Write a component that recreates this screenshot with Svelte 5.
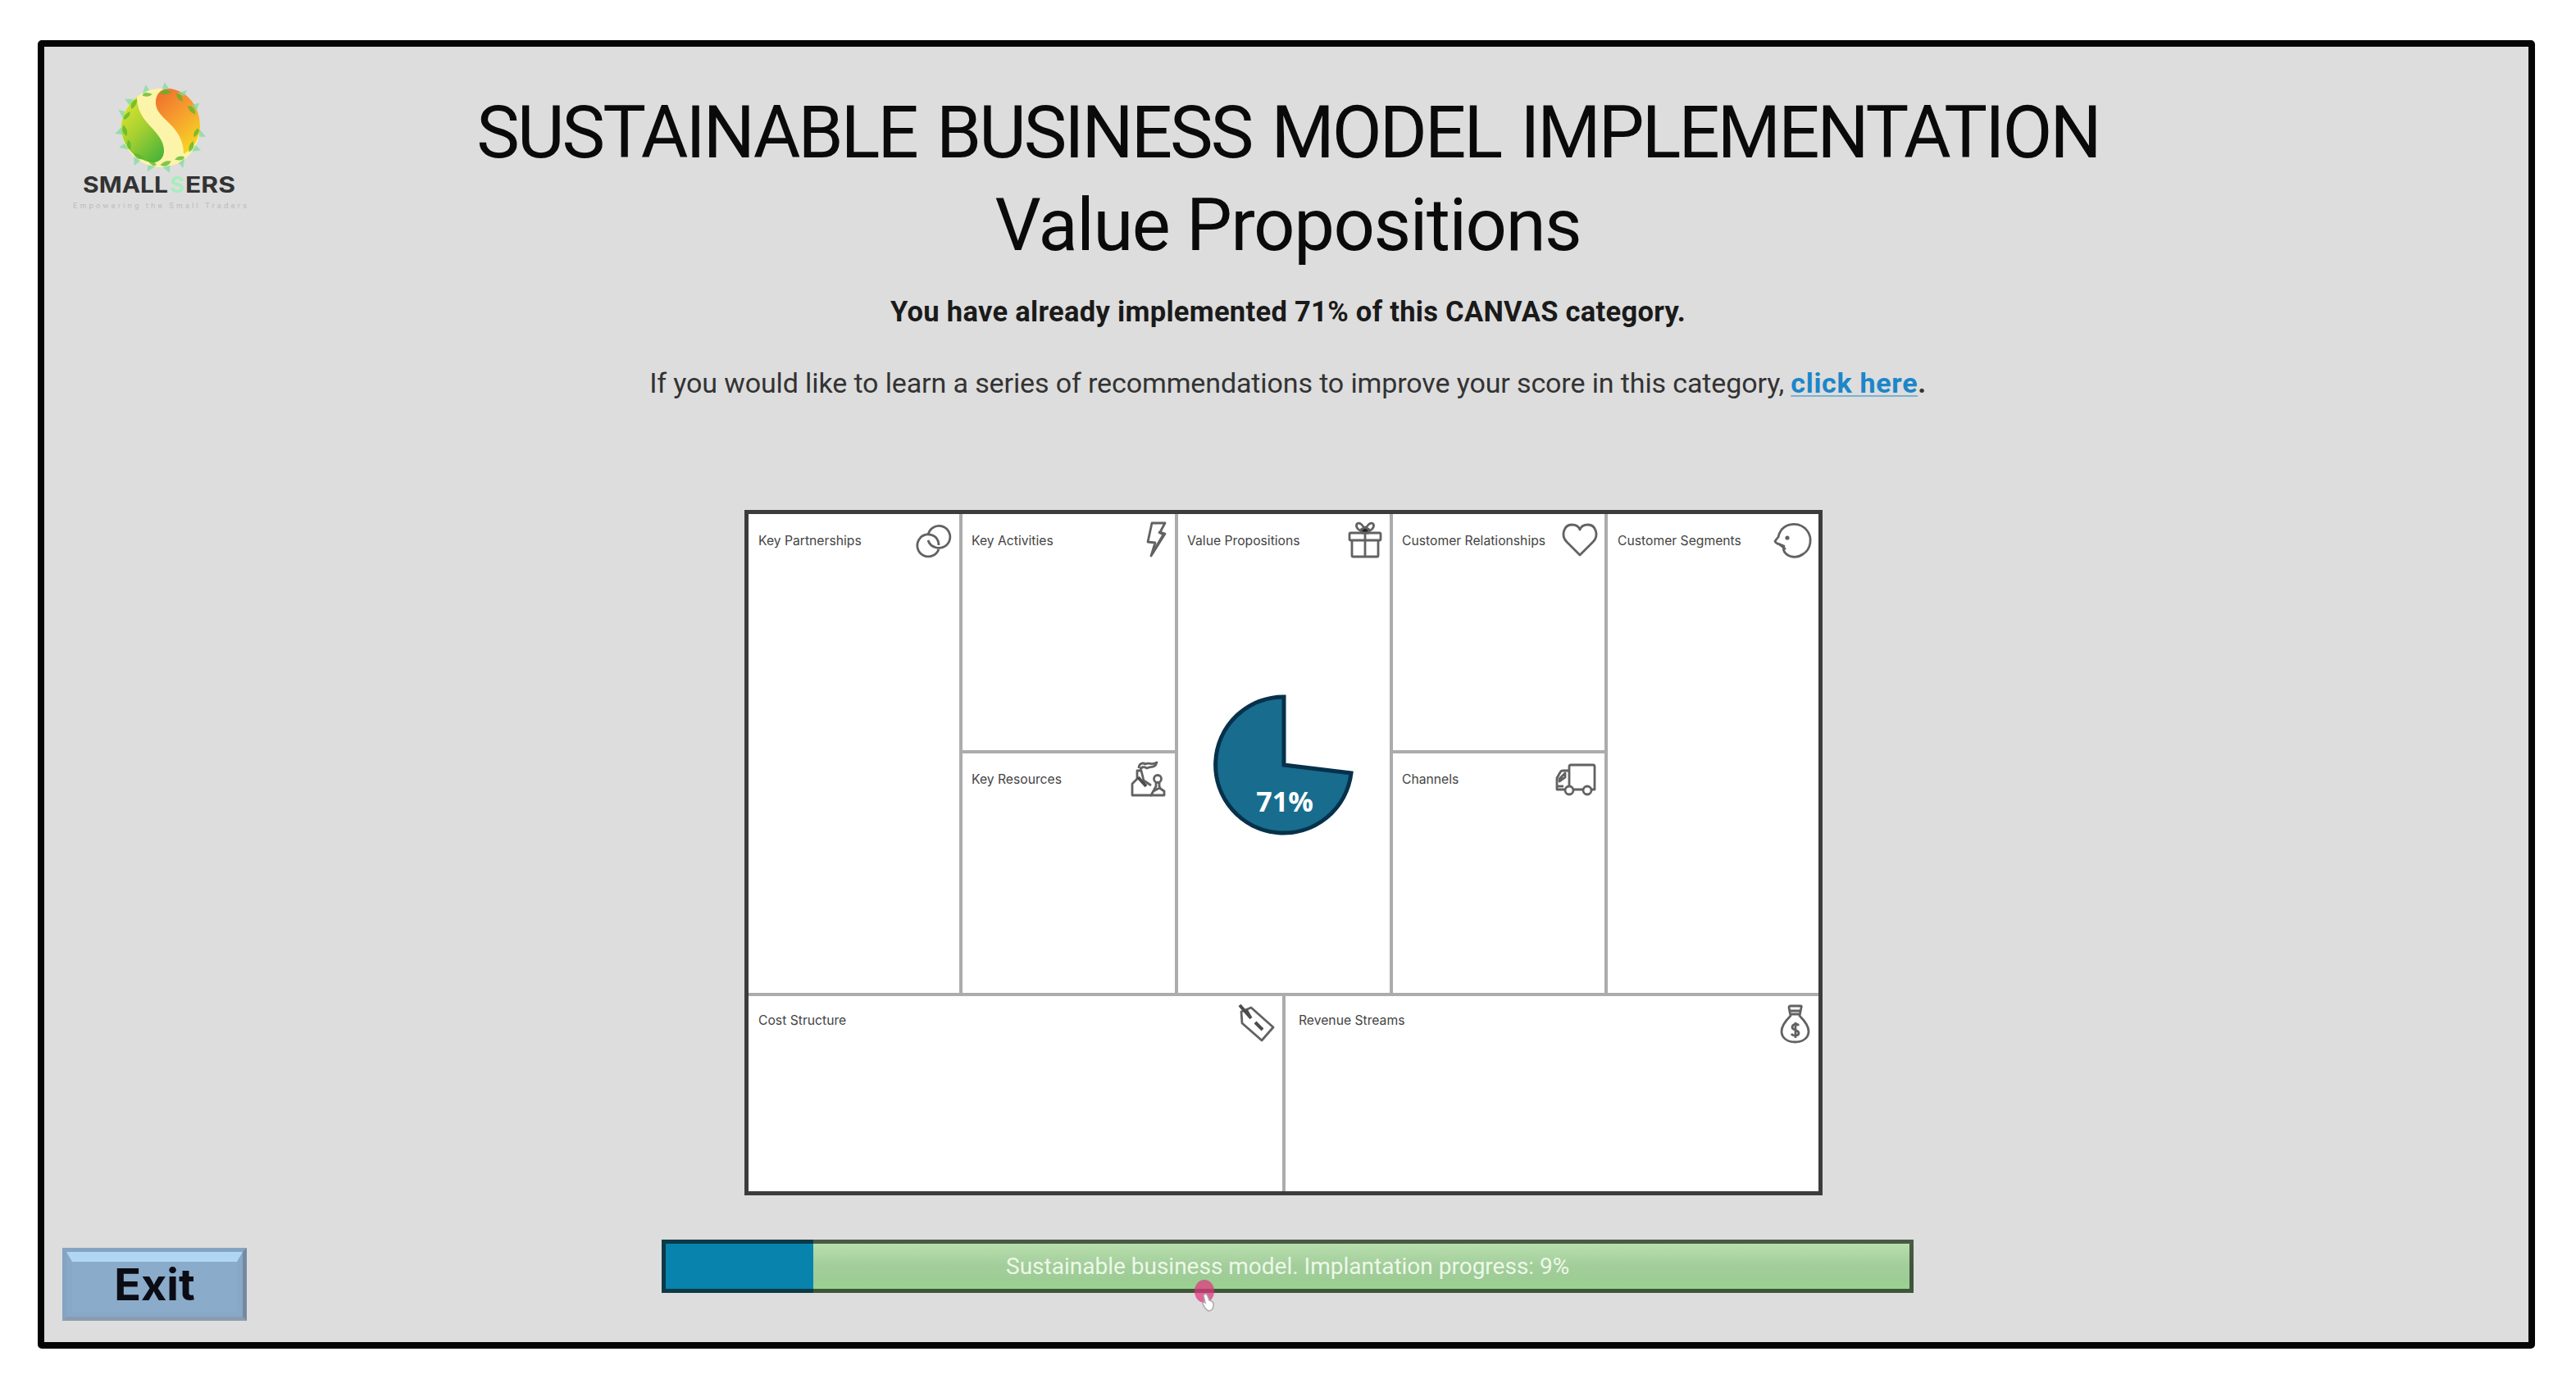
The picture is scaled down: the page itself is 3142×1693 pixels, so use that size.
<script>
  const category = 'Value Propositions';
  const score = 71;
  const progress = 9;

  const blocks = [
    { id: 'partnerships', title: 'Key Partnerships', icon: 'rings' },
    { id: 'activities', title: 'Key Activities', icon: 'bolt' },
    { id: 'resources', title: 'Key Resources', icon: 'factory' },
    { id: 'propositions', title: 'Value Propositions', icon: 'gift' },
    { id: 'relationships', title: 'Customer Relationships', icon: 'heart' },
    { id: 'channels', title: 'Channels', icon: 'truck' },
    { id: 'segments', title: 'Customer Segments', icon: 'face' },
    { id: 'costs', title: 'Cost Structure', icon: 'tag' },
    { id: 'revenue', title: 'Revenue Streams', icon: 'money' },
  ];

  // leaves placed round the logo, in degrees
  const leaves = [8, 32, 58, 82, 104, 128, 152, 176, 200, 222, 248, 278, 302, 330];
</script>

<div class="slide">
  <header class="top">
    <svg class="logo" width="224" height="170" viewBox="86 90 224 170">
      <defs>
        <linearGradient id="orange" x1="0" y1="0" x2="0.6" y2="1">
          <stop offset="0" stop-color="#ee6a2c" />
          <stop offset="0.5" stop-color="#f69a2e" />
          <stop offset="1" stop-color="#f6d324" />
        </linearGradient>
        <linearGradient id="green" x1="0.1" y1="0" x2="0.8" y2="1">
          <stop offset="0" stop-color="#e3e52e" />
          <stop offset="0.5" stop-color="#a5d032" />
          <stop offset="1" stop-color="#4db538" />
        </linearGradient>
      </defs>
      <circle cx="196" cy="156" r="48" fill="#fcf4a8" />
      <path d="M190 127C189 115 196 108 207 108C230 111 244 131 244 154C244 168 236 181 224 188C224 174 219 164 210 154C202 145 191 138 190 127Z" fill="url(#orange)" />
      <path d="M167 118C167 138 178 148 187 158C195 167 200 174 200 184C200 194 193 199 184 198C163 194 148 176 148 155C148 141 156 127 167 118Z" fill="url(#green)" />
      {#each leaves as angle, i}
        <g transform="translate(196 156) rotate({angle})">
          <path d="M42 {i % 2 ? -7 : 6}Q50 -2 45 {i % 2 ? 7 : -6}Q39 0 42 {i % 2 ? -7 : 6}Z" fill="#58b52c" opacity="0.75" />
          <path d="M47 -5L56 {i % 2 ? -3 : 3}L48 4" fill="#7ddc9c" opacity="0.75" />
        </g>
      {/each}
      <g class="brand">
        <text x="101" y="235" textLength="104" lengthAdjust="spacingAndGlyphs">SMALL</text>
        <text x="207" y="235" class="mint" textLength="18" lengthAdjust="spacingAndGlyphs">S</text>
        <text x="226" y="235" textLength="61" lengthAdjust="spacingAndGlyphs">ERS</text>
      </g>
      <text class="tagline" x="89" y="254" textLength="212">Empowering the Small Traders</text>
    </svg>

    <div class="intro">
      <h1>SUSTAINABLE BUSINESS MODEL IMPLEMENTATION</h1>
      <h2>{category}</h2>
      <p class="score">You have already implemented {score}% of this CANVAS category.</p>
      <p class="hint">
        If you would like to learn a series of recommendations to improve your score in this category,
        <b><a href="#recommendations">click here</a>.</b>
      </p>
    </div>
  </header>

  <main class="canvas">
    {#each blocks as block}
      <section class="block {block.id}">
        <div class="block-head">
          <h3>{block.title}</h3>
          <svg class="icon" width="50" height="50" viewBox="0 0 50 50">
            {#if block.icon === 'rings'}
              <path d="M22 19A13.5 13.5 0 1 1 32 34Q24 32 22 25" />
              <path d="M31 21A13.5 13.5 0 1 0 35 36M31 21Q35 25 35 31" />
            {:else if block.icon === 'bolt'}
              <path d="M32 4H48L42 15L48 17L31 44L36 28L27 27Z" />
              <path d="M40 15L46 18L33 40" />
            {:else if block.icon === 'factory'}
              <path d="M32 44H8V30L14 24V14H19L22 26L31 32" />
              <path class="thick" d="M15 22L25 33" />
              <path d="M16 11C16 5 21 4 24 6C28 3 32 8 38 4C36 12 29 8 26 11C22 9 19 9 18 13" />
              <circle cx="39" cy="24" r="4.5" />
              <path d="M37 29V33L31 44H47V39L41 35V29M34 39L43 34" />
            {:else if block.icon === 'gift'}
              <rect x="11" y="16" width="38" height="9" rx="1.5" />
              <path d="M14 25V44Q14 45 15 45H45Q46 45 46 44V25M30 16V45" />
              <path d="M30 15C22 14 18 9 20 5C24 2 29 8 30 14C31 8 36 2 40 5C42 9 38 14 30 15Z" />
              <path class="solid" d="M25 12L30 9L35 12L34 16H26Z" />
            {:else if block.icon === 'heart'}
              <path d="M30 43L14 27C6 19 11 6 20 6C26 6 29 9 30 12C31 9 34 6 40 6C49 6 54 19 46 27Z" />
            {:else if block.icon === 'truck'}
              <path d="M17 32V9Q17 7 19 7H46Q48 7 48 9V37H44M34 37H22M12 37H2V23L6 16Q7 14 9 14H17" />
              <path d="M12 17L5 24V27L12 22Z" />
              <path d="M2 33H10" />
              <circle cx="17" cy="38" r="5" />
              <circle cx="39" cy="38" r="5" />
            {:else if block.icon === 'face'}
              <path d="M20 41C25 46 34 47 41 42C51 36 53 22 46 13C38 3 23 3 15 12Q12 16 11 21L7 26Q8 29 13 30L18 32Q16 37 20 41Z" />
              <path d="M11 29L20 36" />
              <circle class="solid" cx="22" cy="22" r="1.2" />
            {:else if block.icon === 'tag'}
              <path d="M10 12L22 7L49 31L35 47L11 26Z" />
              <path class="thick" d="M8 4L22 20M16 10L21 19M27 25L36 34" />
            {:else if block.icon === 'money'}
              <path d="M26 17L24 7Q24 5 26 5H38Q40 5 39 7L37 17C41 21 48 29 48 36C48 44 41 49 31.5 49C22 49 15 44 15 36C15 29 22 21 26 17Z" />
              <path d="M26 11H38M27 15H37" />
              <path d="M36 29C34 26 28 27 28 31C28 35 36 34 36 38C36 42 29 42 27 39M32 25V44" />
            {/if}
          </svg>
        </div>
        {#if block.title === category}
          <svg class="pie" width="172" height="172" viewBox="-86 -86 172 172">
            <path d="M-1 -83A83 83 0 1 0 81 10L-1 0Z" />
            <text y="57">{score}%</text>
          </svg>
        {/if}
      </section>
    {/each}
  </main>

  <footer class="bottom">
    <button class="exit"><span>Exit</span></button>
    <div class="bar">
      <div class="done"></div>
      <span class="bar-text">Sustainable business model. Implantation progress: {progress}%</span>
      <svg class="pointer" width="36" height="48" viewBox="0 0 36 48">
        <ellipse cx="14" cy="19" rx="12" ry="14" fill="#e0357f" opacity="0.72" />
        <path d="M13 24Q16 20 18 25L20 30Q26 31 25 37Q24 43 19 43Q14 40 12 34Q13 31 15 33Z" fill="#fff" stroke="#aaa" stroke-width="1.5" />
      </svg>
    </div>
  </footer>
</div>

<style>
  :global(body) {
    background: #fff;
  }
  .slide {
    box-sizing: border-box;
    width: 3046px;
    height: 1596px;
    margin: 49px 0 0 46px;
    border: 8px solid #050505;
    border-radius: 5px;
    background: #ddd;
    font-family: Roboto, 'Liberation Sans', sans-serif;
    color: #0a0a0a;
    display: flow-root;
  }
  h1, h2, h3, p {
    margin: 0;
    font-weight: 400;
  }
  .top {
    display: grid;
    grid-template-columns: 300px 1fr 296px;
    height: 565px;
  }
  .logo {
    margin: 33px 0 0 32px;
  }
  .brand {
    font: 700 27px Inter, sans-serif;
    fill: #333;
  }
  .mint {
    fill: #a9ecbd;
  }
  .tagline {
    font: 9px Inter, sans-serif;
    fill: #bcbcbc;
  }
  .intro {
    padding-top: 50px;
    text-align: center;
    white-space: nowrap;
  }
  h1, h2 {
    font-size: 88.5px;
    line-height: 111.4px;
  }
  h1 {
    letter-spacing: -2.9px;
    word-spacing: 5px;
  }
  h2 {
    margin-top: 2px;
    letter-spacing: -1.4px;
  }
  .score {
    margin-top: 23px;
    font-size: 34.5px;
    font-weight: 700;
    line-height: 50px;
    letter-spacing: 0.3px;
    color: #1a1a1a;
  }
  .hint {
    margin-top: 37px;
    font-size: 34px;
    line-height: 50px;
    letter-spacing: -0.12px;
    color: #333;
  }
  .hint b {
    letter-spacing: 0.7px;
  }
  .hint a {
    color: #1c86c8;
    text-decoration: underline;
    text-decoration-thickness: 2px;
    text-underline-offset: 3px;
    text-decoration-color: rgba(28, 134, 200, 0.5);
  }

  /* business model canvas */
  .canvas {
    box-sizing: border-box;
    width: 1315px;
    height: 836px;
    margin-left: 854px;
    border: 5px solid #3c3c3c;
    background: #fff;
    display: grid;
    grid-template-columns: 261px 263px 129px 2px 131px 262px 257px;
    grid-template-rows: 292px 296px 238px;
  }
  .block {
    --label-top: 16px;
    box-sizing: border-box;
    border: 0 solid #acacac;
    border-right-width: 4px;
    border-bottom-width: 4px;
    padding: 7px 10px 0 11px;
  }
  .partnerships {
    grid-area: 1 / 1 / 3 / 2;
    padding-left: 12px;
  }
  .activities {
    grid-area: 1 / 2;
  }
  .resources {
    grid-area: 2 / 2;
    --label-top: 15px;
  }
  .propositions {
    grid-area: 1 / 3 / 3 / 6;
  }
  .relationships {
    grid-area: 1 / 6;
  }
  .channels {
    grid-area: 2 / 6;
    --label-top: 15px;
  }
  .segments {
    grid-area: 1 / 7 / 3 / 8;
    border-right-width: 0;
    padding-left: 12px;
  }
  .costs {
    grid-area: 3 / 1 / 4 / 5;
    border-bottom-width: 0;
    padding-left: 12px;
    --label-top: 13px;
  }
  .revenue {
    grid-area: 3 / 5 / 4 / 8;
    border-width: 0;
    padding-left: 16px;
    --label-top: 13px;
  }
  .block-head {
    display: flex;
    justify-content: space-between;
    height: 50px;
  }
  h3 {
    margin-top: var(--label-top);
    font: 15.7px/20px Inter, 'Liberation Sans', sans-serif;
    color: #444;
    white-space: nowrap;
  }
  .icon {
    flex: none;
    overflow: visible;
    fill: none;
    stroke: #626262;
    stroke-width: 2.8;
    stroke-linejoin: round;
  }
  .icon .solid {
    fill: #222;
  }
  .icon .thick {
    stroke: #4c4c4c;
    stroke-width: 4;
  }
  .pie {
    display: block;
    margin: 163px auto 0;
    overflow: visible;
  }
  .pie path {
    fill: #186c8e;
    stroke: #07314b;
    stroke-width: 5;
  }
  .pie text {
    font: 700 34px 'Open Sans', sans-serif;
    fill: #fff;
    text-anchor: middle;
  }

  .bottom {
    display: grid;
    grid-template-columns: 753px 1527px;
    align-items: start;
    margin-top: 54px;
  }
  .exit {
    width: 225px;
    height: 89px;
    margin: 10px 0 0 22px;
    padding: 0;
    border: 5px solid #84a4c3;
    border-right-color: #76899f;
    border-bottom-color: #8b9bb0;
    background: #8aabca;
    font: 700 54px/56px Inter, sans-serif;
    color: #0b0c14;
  }
  .exit span {
    display: block;
    box-sizing: border-box;
    height: 79px;
    border: 7px solid #87a8c7;
    border-top: 12px solid #b0d6f4;
    border-bottom: 6px solid #88a8c7;
  }
  .bar {
    position: relative;
    display: flex;
    align-items: center;
    height: 65px;
    background: linear-gradient(#b9e0ae 5%, #a2cd9a 50%, #9dcd95 75%, #97d68b);
  }
  .bar::after {
    content: '';
    position: absolute;
    inset: 0;
    border: 5px solid rgba(15, 20, 15, 0.66);
  }
  .done {
    width: 185px;
    height: 65px;
    background: #0783ae;
  }
  .bar-text {
    margin: 0 0 0 235px;
    font-size: 28px;
    line-height: 34px;
    color: #edf8e8;
  }
  .pointer {
    position: absolute;
    left: 648px;
    top: 44px;
    z-index: 1;
  }
</style>
